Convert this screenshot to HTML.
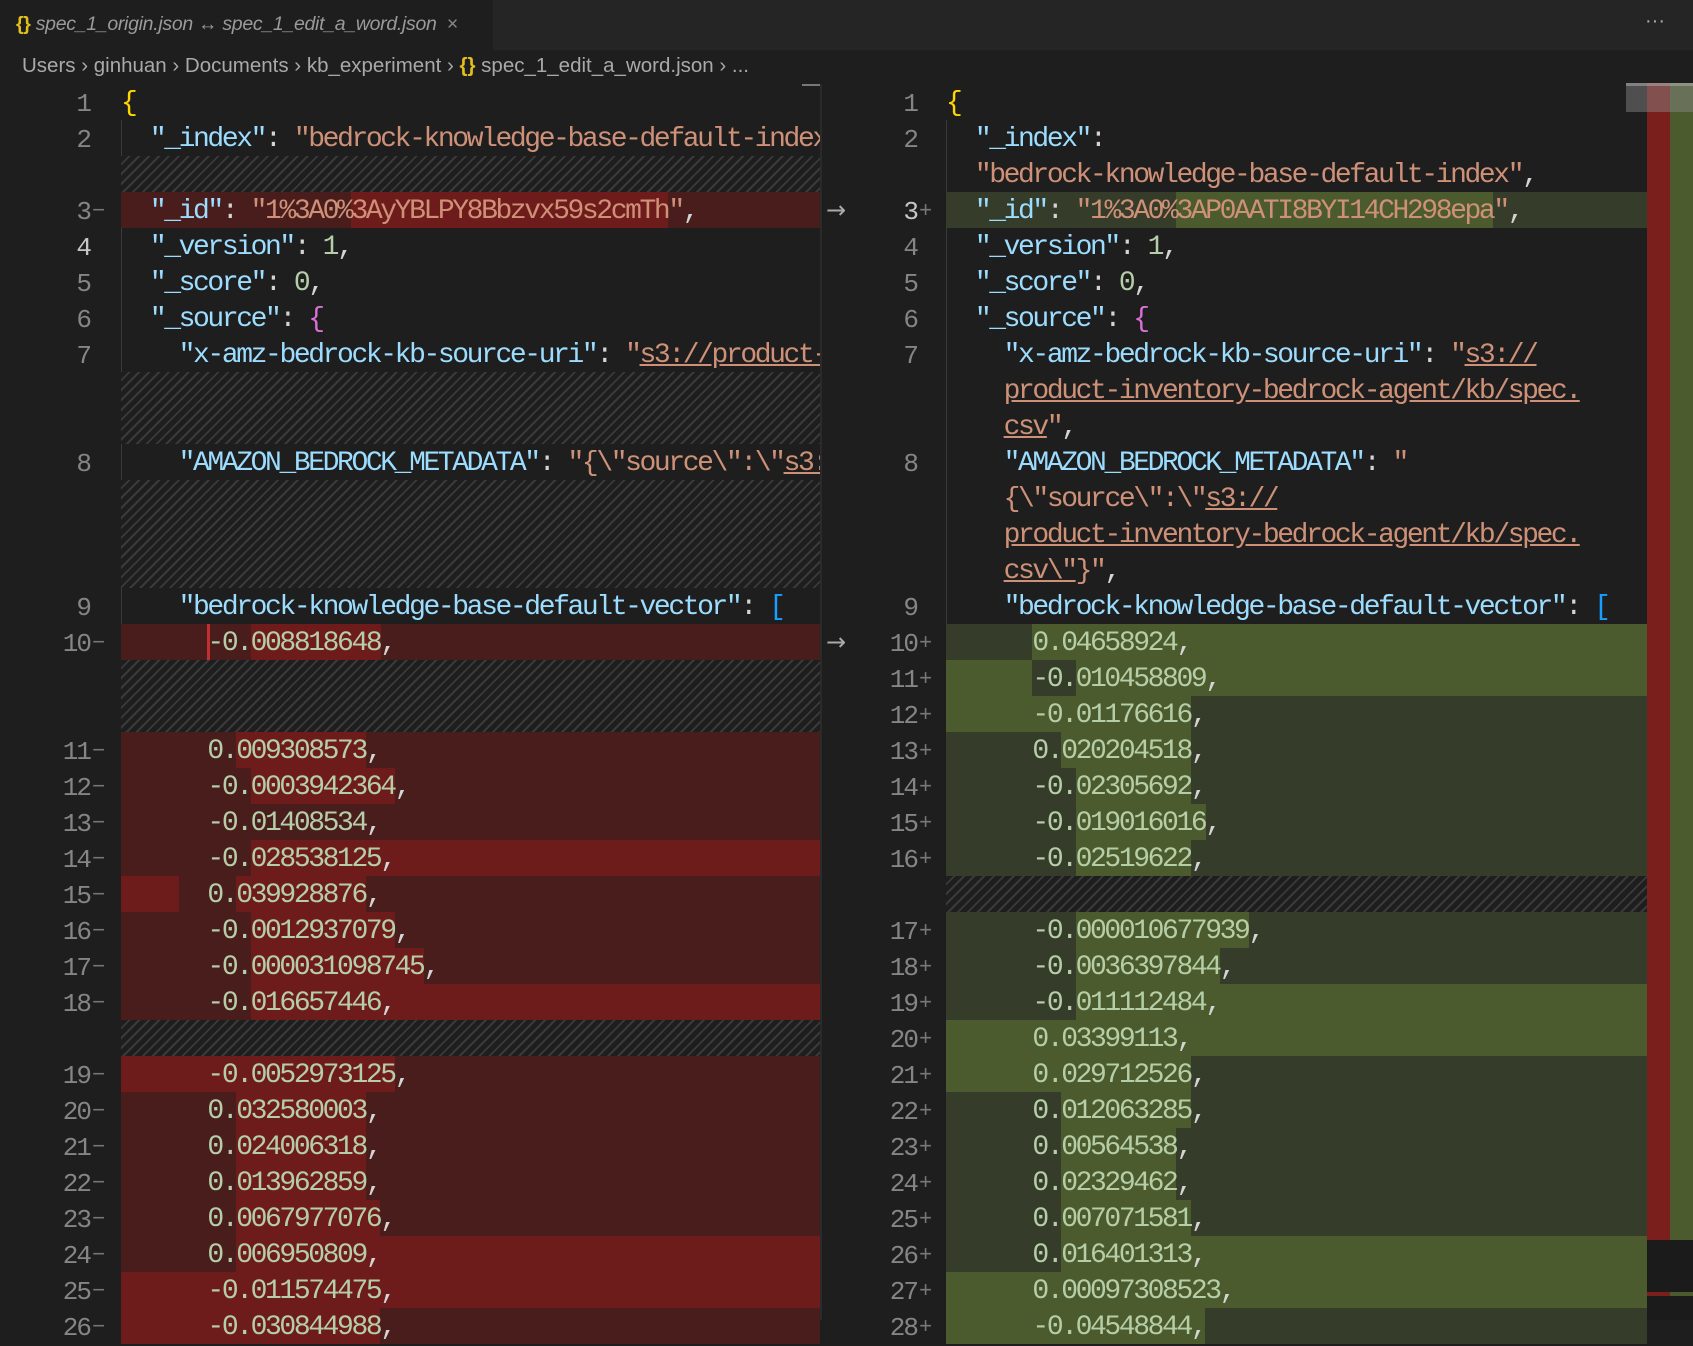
<!DOCTYPE html>
<html><head><meta charset="utf-8"><style>
*{margin:0;padding:0;box-sizing:border-box}
body{width:1693px;height:1320px;background:#1e1e1e;position:relative;overflow:hidden;font-family:"Liberation Mono",monospace}
.tabbar{position:absolute;left:0;top:0;width:1693px;height:50px;background:#252526}
.tab{position:absolute;left:0;top:0;width:493px;height:50px;background:#1e1e1e;font-family:"Liberation Sans",sans-serif;font-style:italic;font-size:19.5px;color:#9a9a9a;line-height:48px;padding-left:16px;white-space:nowrap;letter-spacing:-0.3px}
.crumb{position:absolute;left:22px;top:53px;font-family:"Liberation Sans",sans-serif;font-size:20.5px;color:#a9a9a9;white-space:nowrap;line-height:26px}
.wrap{position:absolute;left:0;top:3px;width:1693px;height:1320px}
.row{position:absolute;height:36px;overflow:hidden}
.L{left:121px;width:699px}
.R{left:946px;width:701px}
.dr{background:#4a1d1d}.dg{background:#363c2a}
.row i{position:absolute;top:0;height:36px}
.row.dr i{background:#6e1c1b}.row.dg i{background:#4b5b2d}
.h{background:repeating-linear-gradient(135deg,#1e1e1e 0 5px,#3a3a3a 5px 7px)}
.row pre{position:absolute;left:0;top:2px;font-family:"Liberation Mono",monospace;font-size:28px;letter-spacing:-2.4px;line-height:36px;color:#d4d4d4;white-space:pre}
.k{color:#9cdcfe}.s{color:#ce9178}.n{color:#b5cea8}.y{color:#ffd700}.m{color:#da70d6}.b{color:#179fff}.u{text-decoration:underline}
.ln{position:absolute;width:60px;text-align:right;font-family:"Liberation Mono",monospace;font-size:26px;letter-spacing:-2px;color:#858585;line-height:36px;height:36px;padding-top:2px}
.ln span{position:absolute;left:62px;top:2px;color:#777;font-size:22px}
.lnL{left:30px}.lnR{left:857px}
.act{color:#c6c6c6}
.arr{position:absolute;left:826px;color:#aaa;font-size:24px;line-height:36px;font-family:"DejaVu Sans",sans-serif}
</style></head><body>
<div class="tabbar"></div>
<div class="tab"><span style="color:#e2c01c;font-style:normal;font-weight:bold">{}</span> spec_1_origin.json ↔ spec_1_edit_a_word.json &nbsp;<span style="font-style:normal;color:#888">×</span></div>
<div style="position:absolute;left:1645px;top:10px;color:#aaa;font-family:'Liberation Sans',sans-serif;font-size:20px">···</div>
<div class="crumb">Users › ginhuan › Documents › kb_experiment › <span style="color:#e2c01c;font-weight:bold">{}</span> spec_1_edit_a_word.json › ...</div>

<div style="position:absolute;left:802px;top:84px;width:18px;height:2px;background:#777"></div>
<div style="position:absolute;left:820px;top:84px;width:2px;height:1236px;background:#2a2a2a"></div>

<div class="wrap">
<div style="position:absolute;left:121px;top:117px;width:1px;height:1203px;background:#3a3a3a"></div>
<div style="position:absolute;left:946px;top:117px;width:1px;height:1203px;background:#3a3a3a"></div>

<!-- LEFT rows -->
<div class="row L" style="top:81px"><pre><span class="y">{</span></pre></div>
<div class="row L" style="top:117px"><pre>  <span class="k">"_index"</span>: <span class="s">"bedrock-knowledge-base-default-index",</span></pre></div>
<div class="row L h" style="top:153px"></div>
<div class="row L dr" style="top:189px"><i style="left:230px;width:317px"></i><pre>  <span class="k">"_id"</span>: <span class="s">"1%3A0%3AyYBLPY8Bbzvx59s2cmTh"</span>,</pre></div>
<div class="row L" style="top:225px"><pre>  <span class="k">"_version"</span>: <span class="n">1</span>,</pre></div>
<div class="row L" style="top:261px"><pre>  <span class="k">"_score"</span>: <span class="n">0</span>,</pre></div>
<div class="row L" style="top:297px"><pre>  <span class="k">"_source"</span>: <span class="m">{</span></pre></div>
<div class="row L" style="top:333px"><pre>    <span class="k">"x-amz-bedrock-kb-source-uri"</span>: <span class="s">"<span class="u">s3://product-inventory-bedrock-agent</span></span></pre></div>
<div class="row L h" style="top:369px;height:72px"></div>
<div class="row L" style="top:441px"><pre>    <span class="k">"AMAZON_BEDROCK_METADATA"</span>: <span class="s">"{\"source\":\"<span class="u">s3://product</span></span></pre></div>
<div class="row L h" style="top:477px;height:108px"></div>
<div class="row L" style="top:585px"><pre>    <span class="k">"bedrock-knowledge-base-default-vector"</span>: <span class="b">[</span></pre></div>
<div class="row L dr" style="top:621px"><i style="left:130px;width:130px"></i><i style="left:86px;width:3px;background:#c03030"></i><pre>      <span class="n">-0.008818648</span>,</pre></div>
<div class="row L h" style="top:657px;height:72px"></div>
<div class="row L dr" style="top:729px"><i style="left:115px;width:130px"></i><pre>      <span class="n">0.009308573</span>,</pre></div>
<div class="row L dr" style="top:765px"><i style="left:130px;width:144px"></i><pre>      <span class="n">-0.0003942364</span>,</pre></div>
<div class="row L dr" style="top:801px"><pre>      <span class="n">-0.01408534</span>,</pre></div>
<div class="row L dr" style="top:837px"><i style="left:130px;width:600px"></i><pre>      <span class="n">-0.028538125</span>,</pre></div>
<div class="row L dr" style="top:873px"><i style="left:0;width:58px"></i><i style="left:115px;width:130px"></i><pre>      <span class="n">0.039928876</span>,</pre></div>
<div class="row L dr" style="top:909px"><i style="left:130px;width:144px"></i><pre>      <span class="n">-0.0012937079</span>,</pre></div>
<div class="row L dr" style="top:945px"><i style="left:130px;width:173px"></i><pre>      <span class="n">-0.000031098745</span>,</pre></div>
<div class="row L dr" style="top:981px"><i style="left:130px;width:600px"></i><pre>      <span class="n">-0.016657446</span>,</pre></div>
<div class="row L h" style="top:1017px"></div>
<div class="row L dr" style="top:1053px"><i style="left:0;width:274px"></i><pre>      <span class="n">-0.0052973125</span>,</pre></div>
<div class="row L dr" style="top:1089px"><i style="left:115px;width:130px"></i><pre>      <span class="n">0.032580003</span>,</pre></div>
<div class="row L dr" style="top:1125px"><i style="left:115px;width:130px"></i><pre>      <span class="n">0.024006318</span>,</pre></div>
<div class="row L dr" style="top:1161px"><i style="left:115px;width:130px"></i><pre>      <span class="n">0.013962859</span>,</pre></div>
<div class="row L dr" style="top:1197px"><i style="left:115px;width:144px"></i><pre>      <span class="n">0.0067977076</span>,</pre></div>
<div class="row L dr" style="top:1233px"><i style="left:115px;width:600px"></i><pre>      <span class="n">0.006950809</span>,</pre></div>
<div class="row L dr" style="top:1269px"><i style="left:0;width:700px"></i><pre>      <span class="n">-0.011574475</span>,</pre></div>
<div class="row L dr" style="top:1305px"><i style="left:0;width:259px"></i><pre>      <span class="n">-0.030844988</span>,</pre></div>

<!-- LEFT line numbers -->
<div class="ln lnL" style="top:81px">1</div>
<div class="ln lnL" style="top:117px">2</div>
<div class="ln lnL" style="top:189px">3<span>−</span></div>
<div class="ln lnL act" style="top:225px">4</div>
<div class="ln lnL" style="top:261px">5</div>
<div class="ln lnL" style="top:297px">6</div>
<div class="ln lnL" style="top:333px">7</div>
<div class="ln lnL" style="top:441px">8</div>
<div class="ln lnL" style="top:585px">9</div>
<div class="ln lnL" style="top:621px">10<span>−</span></div>
<div class="ln lnL" style="top:729px">11<span>−</span></div>
<div class="ln lnL" style="top:765px">12<span>−</span></div>
<div class="ln lnL" style="top:801px">13<span>−</span></div>
<div class="ln lnL" style="top:837px">14<span>−</span></div>
<div class="ln lnL" style="top:873px">15<span>−</span></div>
<div class="ln lnL" style="top:909px">16<span>−</span></div>
<div class="ln lnL" style="top:945px">17<span>−</span></div>
<div class="ln lnL" style="top:981px">18<span>−</span></div>
<div class="ln lnL" style="top:1053px">19<span>−</span></div>
<div class="ln lnL" style="top:1089px">20<span>−</span></div>
<div class="ln lnL" style="top:1125px">21<span>−</span></div>
<div class="ln lnL" style="top:1161px">22<span>−</span></div>
<div class="ln lnL" style="top:1197px">23<span>−</span></div>
<div class="ln lnL" style="top:1233px">24<span>−</span></div>
<div class="ln lnL" style="top:1269px">25<span>−</span></div>
<div class="ln lnL" style="top:1305px">26<span>−</span></div>

<div class="arr" style="top:189px">→</div>
<div class="arr" style="top:621px">→</div>

<!-- RIGHT rows -->
<div class="row R" style="top:81px"><pre><span class="y">{</span></pre></div>
<div class="row R" style="top:117px"><pre>  <span class="k">"_index"</span>:</pre></div>
<div class="row R" style="top:153px"><pre>  <span class="s">"bedrock-knowledge-base-default-index"</span>,</pre></div>
<div class="row R dg" style="top:189px"><i style="left:230px;width:317px"></i><pre>  <span class="k">"_id"</span>: <span class="s">"1%3A0%3AP0AATI8BYI14CH298epa"</span>,</pre></div>
<div class="row R" style="top:225px"><pre>  <span class="k">"_version"</span>: <span class="n">1</span>,</pre></div>
<div class="row R" style="top:261px"><pre>  <span class="k">"_score"</span>: <span class="n">0</span>,</pre></div>
<div class="row R" style="top:297px"><pre>  <span class="k">"_source"</span>: <span class="m">{</span></pre></div>
<div class="row R" style="top:333px"><pre>    <span class="k">"x-amz-bedrock-kb-source-uri"</span>: <span class="s">"<span class="u">s3://</span></span></pre></div>
<div class="row R" style="top:369px"><pre>    <span class="s u">product-inventory-bedrock-agent/kb/spec.</span></pre></div>
<div class="row R" style="top:405px"><pre>    <span class="s"><span class="u">csv</span>"</span>,</pre></div>
<div class="row R" style="top:441px"><pre>    <span class="k">"AMAZON_BEDROCK_METADATA"</span>: <span class="s">"</span></pre></div>
<div class="row R" style="top:477px"><pre>    <span class="s">{\"source\":\"<span class="u">s3://</span></span></pre></div>
<div class="row R" style="top:513px"><pre>    <span class="s u">product-inventory-bedrock-agent/kb/spec.</span></pre></div>
<div class="row R" style="top:549px"><pre>    <span class="s"><span class="u">csv\"</span>}"</span>,</pre></div>
<div class="row R" style="top:585px"><pre>    <span class="k">"bedrock-knowledge-base-default-vector"</span>: <span class="b">[</span></pre></div>
<div class="row R dg" style="top:621px"><i style="left:86px;width:620px"></i><pre>      <span class="n">0.04658924</span>,</pre></div>
<div class="row R dg" style="top:657px"><i style="left:0;width:86px"></i><i style="left:130px;width:600px"></i><pre>      <span class="n">-0.010458809</span>,</pre></div>
<div class="row R dg" style="top:693px"><i style="left:0;width:245px"></i><pre>      <span class="n">-0.01176616</span>,</pre></div>
<div class="row R dg" style="top:729px"><i style="left:115px;width:130px"></i><pre>      <span class="n">0.020204518</span>,</pre></div>
<div class="row R dg" style="top:765px"><i style="left:130px;width:115px"></i><pre>      <span class="n">-0.02305692</span>,</pre></div>
<div class="row R dg" style="top:801px"><i style="left:130px;width:130px"></i><pre>      <span class="n">-0.019016016</span>,</pre></div>
<div class="row R dg" style="top:837px"><i style="left:130px;width:115px"></i><pre>      <span class="n">-0.02519622</span>,</pre></div>
<div class="row R h" style="top:873px"></div>
<div class="row R dg" style="top:909px"><i style="left:130px;width:173px"></i><pre>      <span class="n">-0.000010677939</span>,</pre></div>
<div class="row R dg" style="top:945px"><i style="left:130px;width:144px"></i><pre>      <span class="n">-0.0036397844</span>,</pre></div>
<div class="row R dg" style="top:981px"><i style="left:130px;width:600px"></i><pre>      <span class="n">-0.011112484</span>,</pre></div>
<div class="row R dg" style="top:1017px"><i style="left:0;width:710px"></i><pre>      <span class="n">0.03399113</span>,</pre></div>
<div class="row R dg" style="top:1053px"><i style="left:0;width:245px"></i><pre>      <span class="n">0.029712526</span>,</pre></div>
<div class="row R dg" style="top:1089px"><i style="left:115px;width:130px"></i><pre>      <span class="n">0.012063285</span>,</pre></div>
<div class="row R dg" style="top:1125px"><i style="left:115px;width:115px"></i><pre>      <span class="n">0.00564538</span>,</pre></div>
<div class="row R dg" style="top:1161px"><i style="left:115px;width:115px"></i><pre>      <span class="n">0.02329462</span>,</pre></div>
<div class="row R dg" style="top:1197px"><i style="left:115px;width:130px"></i><pre>      <span class="n">0.007071581</span>,</pre></div>
<div class="row R dg" style="top:1233px"><i style="left:115px;width:600px"></i><pre>      <span class="n">0.016401313</span>,</pre></div>
<div class="row R dg" style="top:1269px"><i style="left:0;width:710px"></i><pre>      <span class="n">0.00097308523</span>,</pre></div>
<div class="row R dg" style="top:1305px"><i style="left:0;width:259px"></i><pre>      <span class="n">-0.04548844</span>,</pre></div>

<!-- RIGHT line numbers -->
<div class="ln lnR" style="top:81px">1</div>
<div class="ln lnR" style="top:117px">2</div>
<div class="ln lnR act" style="top:189px">3<span>+</span></div>
<div class="ln lnR" style="top:225px">4</div>
<div class="ln lnR" style="top:261px">5</div>
<div class="ln lnR" style="top:297px">6</div>
<div class="ln lnR" style="top:333px">7</div>
<div class="ln lnR" style="top:441px">8</div>
<div class="ln lnR" style="top:585px">9</div>
<div class="ln lnR" style="top:621px">10<span>+</span></div>
<div class="ln lnR" style="top:657px">11<span>+</span></div>
<div class="ln lnR" style="top:693px">12<span>+</span></div>
<div class="ln lnR" style="top:729px">13<span>+</span></div>
<div class="ln lnR" style="top:765px">14<span>+</span></div>
<div class="ln lnR" style="top:801px">15<span>+</span></div>
<div class="ln lnR" style="top:837px">16<span>+</span></div>
<div class="ln lnR" style="top:909px">17<span>+</span></div>
<div class="ln lnR" style="top:945px">18<span>+</span></div>
<div class="ln lnR" style="top:981px">19<span>+</span></div>
<div class="ln lnR" style="top:1017px">20<span>+</span></div>
<div class="ln lnR" style="top:1053px">21<span>+</span></div>
<div class="ln lnR" style="top:1089px">22<span>+</span></div>
<div class="ln lnR" style="top:1125px">23<span>+</span></div>
<div class="ln lnR" style="top:1161px">24<span>+</span></div>
<div class="ln lnR" style="top:1197px">25<span>+</span></div>
<div class="ln lnR" style="top:1233px">26<span>+</span></div>
<div class="ln lnR" style="top:1269px">27<span>+</span></div>
<div class="ln lnR" style="top:1305px">28<span>+</span></div>
</div>

<!-- overview ruler -->
<div style="position:absolute;left:1647px;top:83px;width:23px;height:1157px;background:#7a1f1c"></div>
<div style="position:absolute;left:1670px;top:83px;width:23px;height:1237px;background:#4b5b2d"></div>
<div style="position:absolute;left:1626px;top:83px;width:67px;height:29px;background:rgba(140,140,140,0.45)"></div>
<div style="position:absolute;left:1626px;top:83px;width:67px;height:3px;background:rgba(180,180,180,0.5)"></div>
<div style="position:absolute;left:1647px;top:1240px;width:46px;height:52px;background:#1b1b1b"></div>
<div style="position:absolute;left:1647px;top:1292px;width:23px;height:4px;background:#7a1f1c"></div>
<div style="position:absolute;left:1670px;top:1292px;width:23px;height:4px;background:#4b5b2d"></div>
<div style="position:absolute;left:1647px;top:1296px;width:46px;height:24px;background:#1b1b1b"></div>
</body></html>
